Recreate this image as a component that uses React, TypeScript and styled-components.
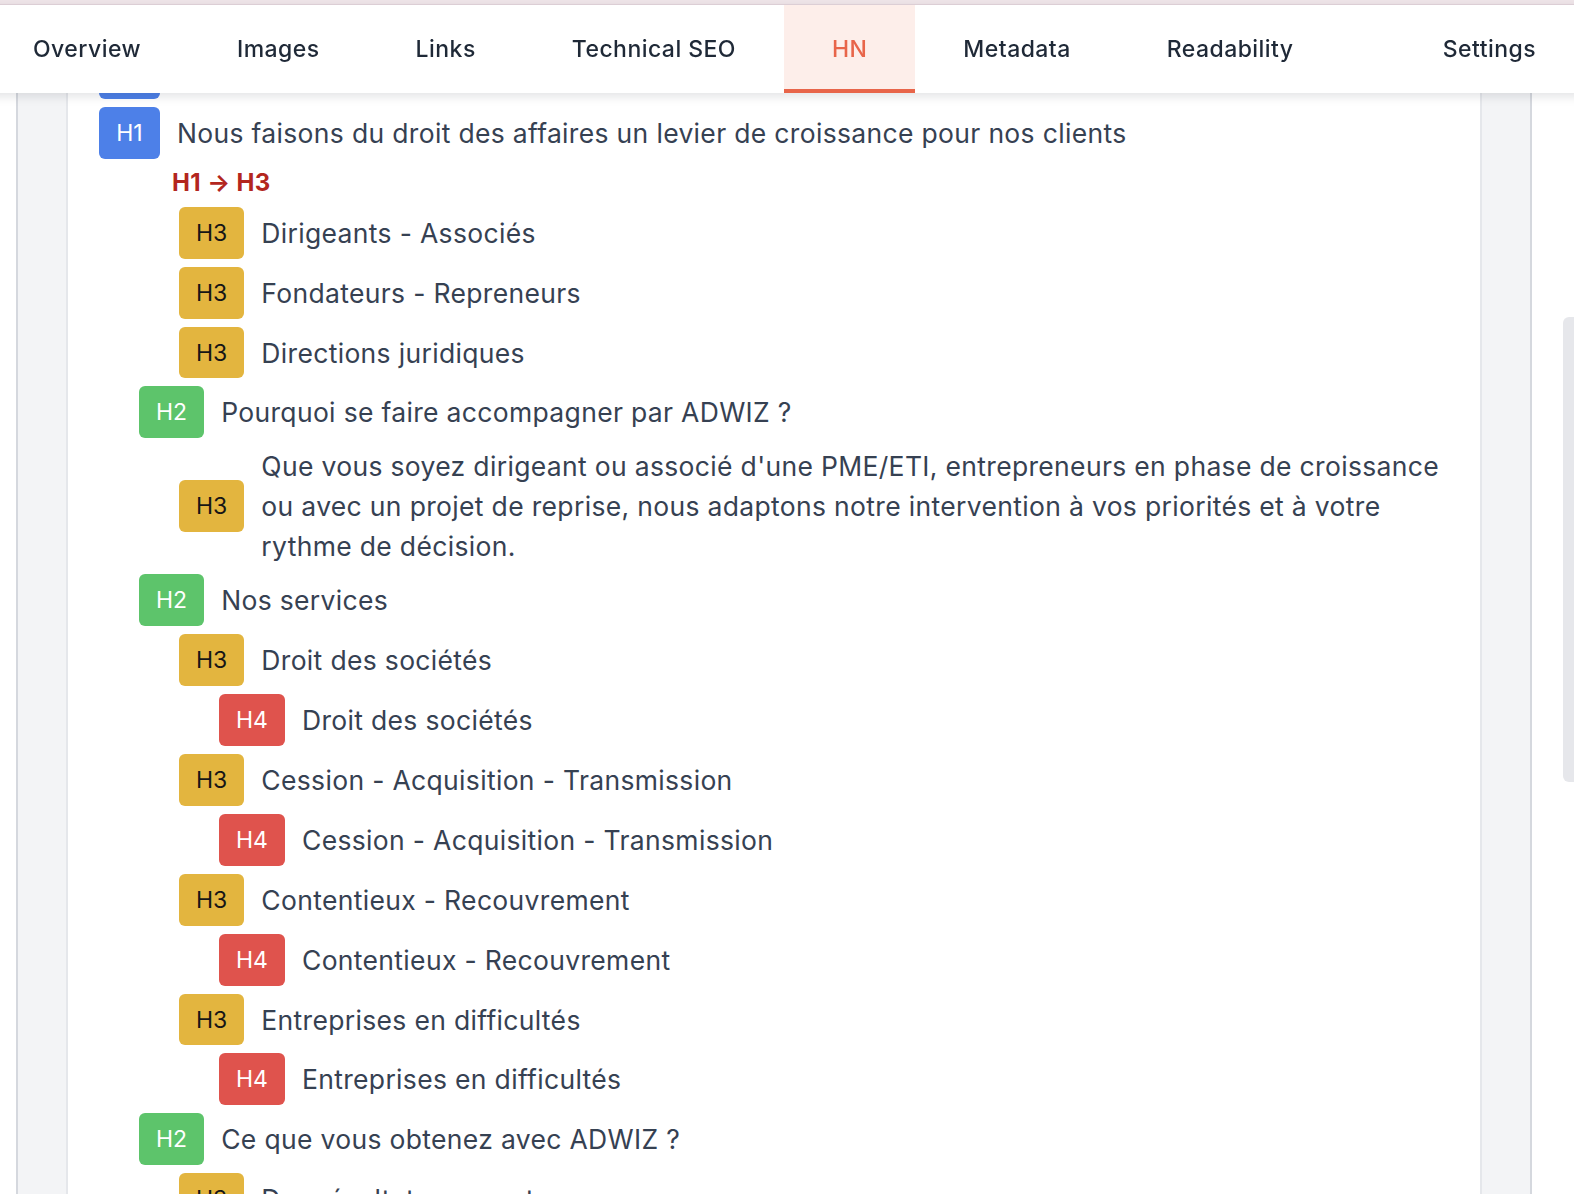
import React from "react";
import styled, { createGlobalStyle, css } from "styled-components";

const GlobalStyle = createGlobalStyle`
  html, body {
    margin: 0;
    padding: 0;
    background: #ffffff;
    overflow: hidden;
  }
  body {
    font-family: Inter, "Noto Sans", "Liberation Sans", sans-serif;
    -webkit-font-smoothing: antialiased;
  }
  * { box-sizing: border-box; }
`;

type Level = 1 | 2 | 3 | 4;

const badgeColors: Record<Level, { bg: string; fg: string }> = {
  1: { bg: "#4d80e8", fg: "#ffffff" },
  2: { bg: "#5dc46b", fg: "#ffffff" },
  3: { bg: "#e3b53f", fg: "#161616" },
  4: { bg: "#df534d", fg: "#ffffff" },
};

const Page = styled.div`
  position: relative;
  width: 100%;
  height: 1194px;
  overflow: hidden;
`;

const BrowserStrip = styled.div`
  height: 5px;
  background: #efe5e9;
  border-bottom: 1px solid #e4d5db;
`;

const TabBar = styled.nav`
  position: sticky;
  top: 0;
  z-index: 5;
  display: flex;
  height: 88px;
  margin-left: -15px;
  margin-right: -10px;
  background: #ffffff;
  box-shadow: 0 3px 10px rgba(17, 24, 39, 0.13);
`;

const Tab = styled.div<{ $active?: boolean; $pushRight?: boolean }>`
  display: flex;
  align-items: center;
  padding: 4px 48px 0;
  font-size: 23px;
  letter-spacing: 0.45px;
  font-weight: 500;
  color: #1f2937;
  border-bottom: 4px solid transparent;
  white-space: nowrap;
  ${(p) =>
    p.$active &&
    css`
      background: #fdeeea;
      color: #e8654a;
      border-bottom-color: #e8654a;
    `}
  ${(p) =>
    p.$pushRight &&
    css`
      margin-left: auto;
    `}
`;

const Body = styled.div`
  margin-top: -50px;
  padding-left: 16px;
`;

const OuterPanel = styled.div`
  width: 1516px;
  background: #f3f4f6;
  border-left: 2px solid #d5d8de;
  border-right: 2px solid #d5d8de;
  padding: 0 48px;
`;

const Card = styled.div`
  background: #ffffff;
  border-left: 2px solid #e5e7eb;
  border-right: 2px solid #e5e7eb;
  padding: 0 40px 40px 31px;
  min-height: 1300px;
`;

const Row = styled.div<{ $level: Level }>`
  display: flex;
  align-items: center;
  gap: 17px;
  padding: 4px 0 4px ${(p) => (p.$level - 1) * 40}px;
`;

const Badge = styled.span<{ $level: Level }>`
  flex: none;
  display: inline-flex;
  align-items: center;
  justify-content: center;
  height: 51.9px;
  padding: 0 17px;
  min-width: 61px;
  border-radius: 6px;
  font-size: 23px;
  font-weight: 400;
  background: ${(p) => badgeColors[p.$level].bg};
  color: ${(p) => badgeColors[p.$level].fg};
`;

const HeadingText = styled.span`
  font-size: 26.5px;
  letter-spacing: 0.33px;
  line-height: 40px;
  color: #364152;
`;

const Warning = styled.div`
  height: 40px;
  display: flex;
  align-items: center;
  padding-left: 73px;
  font-size: 24px;
  letter-spacing: 0.4px;
  font-weight: 700;
  color: #b3261e;
`;

const ScrollThumb = styled.div`
  position: absolute;
  right: 0;
  top: 317px;
  width: 11px;
  height: 465px;
  background: #e6e7eb;
  border-radius: 6px 0 0 6px;
`;

type Item =
  | { kind: "h"; level: Level; text: string }
  | { kind: "warn"; text: string };

const items: Item[] = [
  { kind: "h", level: 1, text: "Le cabinet ADWIZ" },
  { kind: "h", level: 1, text: "Nous faisons du droit des affaires un levier de croissance pour nos clients" },
  { kind: "warn", text: "H1 → H3" },
  { kind: "h", level: 3, text: "Dirigeants - Associés" },
  { kind: "h", level: 3, text: "Fondateurs - Repreneurs" },
  { kind: "h", level: 3, text: "Directions juridiques" },
  { kind: "h", level: 2, text: "Pourquoi se faire accompagner par ADWIZ ?" },
  {
    kind: "h",
    level: 3,
    text: "Que vous soyez dirigeant ou associé d'une PME/ETI, entrepreneurs en phase de croissance ou avec un projet de reprise, nous adaptons notre intervention à vos priorités et à votre rythme de décision.",
  },
  { kind: "h", level: 2, text: "Nos services" },
  { kind: "h", level: 3, text: "Droit des sociétés" },
  { kind: "h", level: 4, text: "Droit des sociétés" },
  { kind: "h", level: 3, text: "Cession - Acquisition - Transmission" },
  { kind: "h", level: 4, text: "Cession - Acquisition - Transmission" },
  { kind: "h", level: 3, text: "Contentieux - Recouvrement" },
  { kind: "h", level: 4, text: "Contentieux - Recouvrement" },
  { kind: "h", level: 3, text: "Entreprises en difficultés" },
  { kind: "h", level: 4, text: "Entreprises en difficultés" },
  { kind: "h", level: 2, text: "Ce que vous obtenez avec ADWIZ ?" },
  { kind: "h", level: 3, text: "Des résultats concrets" },
];

const tabs = ["Overview", "Images", "Links", "Technical SEO", "HN", "Metadata", "Readability", "Settings"];

export default function App() {
  return (
    <Page>
      <GlobalStyle />
      <BrowserStrip />
      <TabBar>
        {tabs.map((t) => (
          <Tab key={t} $active={t === "HN"} $pushRight={t === "Settings"}>
            {t}
          </Tab>
        ))}
      </TabBar>
      <Body>
        <OuterPanel>
          <Card>
            {items.map((it, i) =>
              it.kind === "warn" ? (
                <Warning key={i}>{it.text}</Warning>
              ) : (
                <Row key={i} $level={it.level}>
                  <Badge $level={it.level}>H{it.level}</Badge>
                  <HeadingText>{it.text}</HeadingText>
                </Row>
              )
            )}
          </Card>
        </OuterPanel>
      </Body>
      <ScrollThumb />
    </Page>
  );
}
